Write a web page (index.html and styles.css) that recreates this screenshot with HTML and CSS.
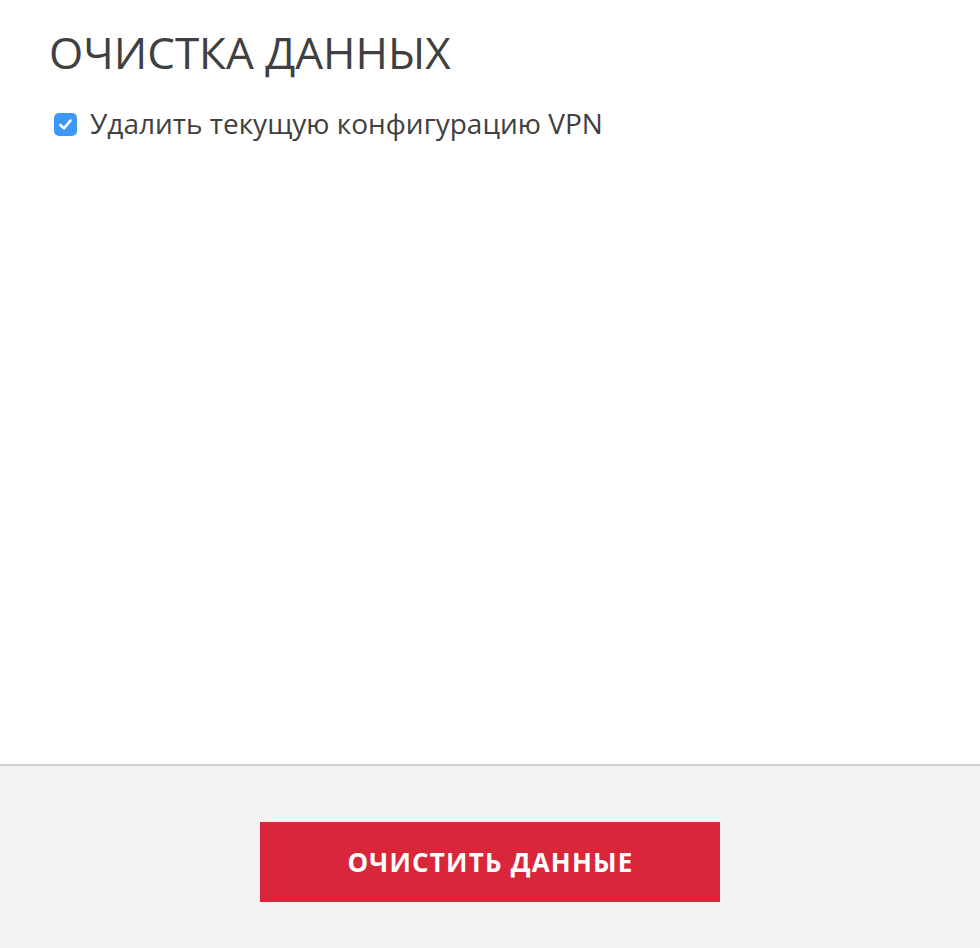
FILE: index.html
```html
<!DOCTYPE html>
<html lang="ru">
<head>
<meta charset="utf-8">
<link rel="stylesheet" href="styles.css">
</head>
<body>
<div class="page">
  <main class="content">
    <h1 class="title">ОЧИСТКА ДАННЫХ</h1>
    <label class="option">
      <span class="check">
        <svg viewBox="0 0 23 23" width="23" height="23"><path d="M6.4 12 L9.9 15.4 L16.4 7.6" fill="none" stroke="#fff" stroke-width="2.6" stroke-linecap="round" stroke-linejoin="round"/></svg>
      </span>
      <span class="label-text">Удалить текущую конфигурацию VPN</span>
    </label>
  </main>
  <footer class="footer">
    <button class="btn">ОЧИСТИТЬ ДАННЫЕ</button>
  </footer>
</div>
</body>
</html>
```
FILE: styles.css
```css
* { box-sizing: border-box; }
html, body { margin: 0; padding: 0; }
body {
  font-family: "Open Sans", "Liberation Sans", sans-serif;
  color: #404040;
  background: #fff;
}
.page {
  height: 948px;
  display: flex;
  flex-direction: column;
}
.content {
  flex: 1;
  padding: 24px 0 0 49px;
}
.title {
  margin: 0;
  font-size: 44px;
  font-weight: 400;
  line-height: 56px;
  color: #404040;
}
.option {
  display: flex;
  align-items: flex-start;
  gap: 13px;
  margin-top: 26px;
  margin-left: 5px;
}
.check {
  flex: none;
  width: 23px;
  height: 23px;
  margin-top: 7px;
  border-radius: 5px;
  background: #3d97f7;
  display: flex;
  align-items: center;
  justify-content: center;
}
.label-text {
  font-size: 28px;
  line-height: 34px;
  color: #404040;
}
.footer {
  height: 184px;
  flex: none;
  background: #f3f3f3;
  border-top: 2px solid #cfcfcf;
  display: flex;
  justify-content: center;
  padding-top: 56px;
}
.btn {
  width: 460px;
  height: 80px;
  border: none;
  background: #da263a;
  color: #fff;
  font-family: "Open Sans", "Liberation Sans", sans-serif;
  font-weight: 700;
  font-size: 26px;
  letter-spacing: 1.2px;
  text-indent: 1px;
}
```
